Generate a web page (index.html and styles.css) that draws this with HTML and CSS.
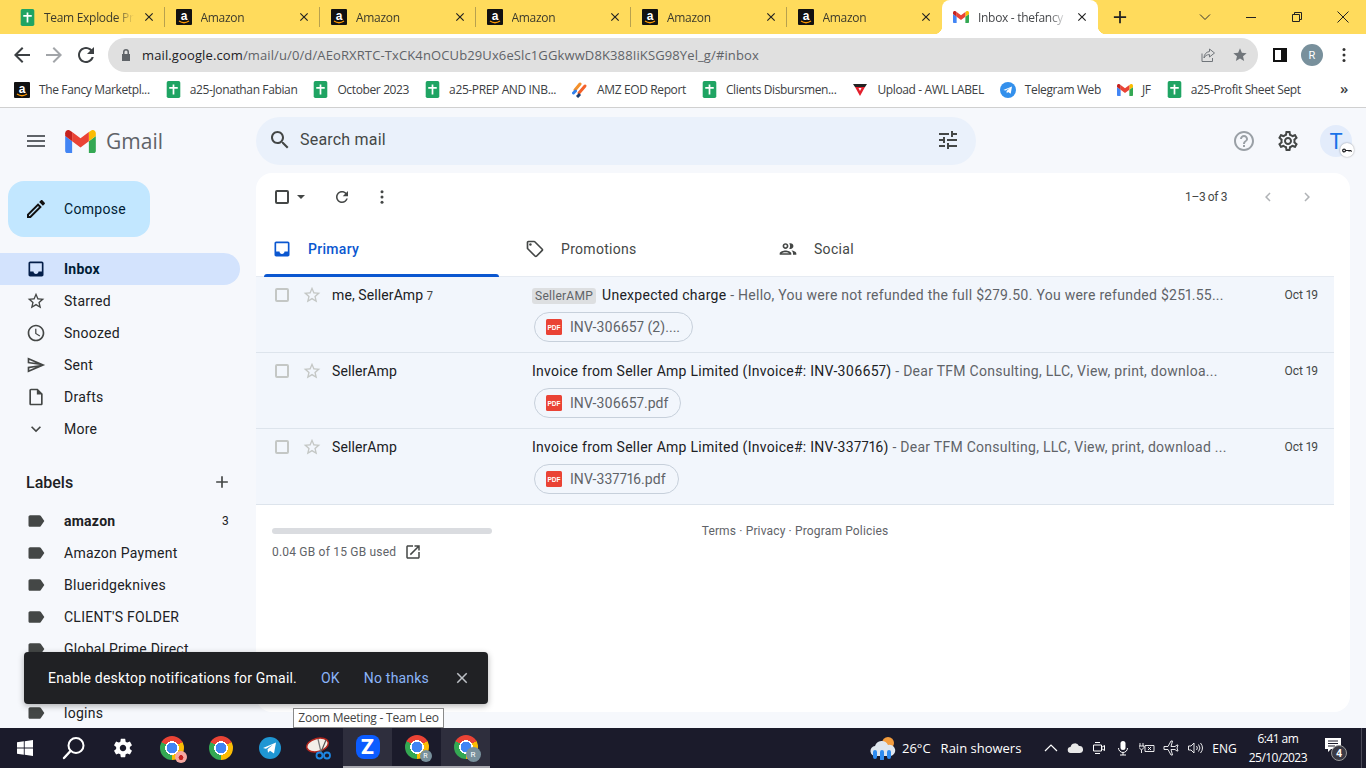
FILE: index.html
```html
<!DOCTYPE html>
<html lang="en">
<head>
  <meta charset="UTF-8" />
  <title>Inbox - Gmail</title>
  <link rel="stylesheet" href="styles.css">
</head>
<body>
  <svg class="defs" width="0" height="0">
    <symbol id="amz" viewBox="0 0 16 16">
      <rect width="16" height="16" rx="1" fill="#111"/>
      <text x="8" y="10.5" font-size="12" font-weight="700" font-family="Liberation Sans" fill="#fff" text-anchor="middle">a</text>
      <path d="M3 12c3 2 7 2 10 0" fill="none" stroke="#f90" stroke-width="1.4"/>
    </symbol>
    <symbol id="sheet" viewBox="0 0 16 20">
      <rect width="16" height="20" rx="2" fill="#1fa463"/>
      <path d="M7 4h2v12H7zM3 7h10v2H3z" fill="#fff"/>
    </symbol>
    <symbol id="gm" viewBox="52 42 88 66">
      <path fill="#4285f4" d="M58 108h14V74L52 59v43c0 3.32 2.69 6 6 6"/>
      <path fill="#34a853" d="M120 108h14c3.32 0 6-2.69 6-6V59l-20 15"/>
      <path fill="#fbbc04" d="M120 48v26l20-15v-8c0-7.42-8.47-11.65-14.4-7.2"/>
      <path fill="#ea4335" d="M72 74V48l24 18 24-18v26L96 92"/>
      <path fill="#c5221f" d="M52 51v8l20 15V48l-5.6-4.2c-5.94-4.45-14.4-.22-14.4 7.2"/>
    </symbol>
    <symbol id="x" viewBox="0 0 24 24"><path d="M19 6.41 17.59 5 12 10.59 6.41 5 5 6.41 10.59 12 5 17.59 6.41 19 12 13.41 17.59 19 19 17.59 13.41 12z"/></symbol>
    <symbol id="label" viewBox="0 0 24 24"><path d="M17.63 5.84C17.27 5.33 16.67 5 16 5L5 5.01C3.9 5.01 3 5.9 3 7v10c0 1.1.9 1.99 2 1.99L16 19c.67 0 1.27-.33 1.63-.84L22 12l-4.37-6.16z"/></symbol>
    <symbol id="star" viewBox="0 0 24 24"><path d="M22 9.24l-7.19-.62L12 2 9.19 8.63 2 9.24l5.46 4.73L5.82 21 12 17.27 18.18 21l-1.63-7.03L22 9.24zM12 15.4l-3.76 2.27 1-4.28-3.32-2.88 4.38-.38L12 6.1l1.71 4.04 4.38.38-3.32 2.88 1 4.28L12 15.4z"/></symbol>
    <symbol id="inbox" viewBox="0 0 24 24"><path d="M19 3H5c-1.1 0-2 .9-2 2v14c0 1.1.9 2 2 2h14c1.1 0 2-.9 2-2V5c0-1.1-.9-2-2-2zm0 12h-4c0 1.66-1.34 3-3 3s-3-1.34-3-3H5V5h14v10z"/></symbol>
    <symbol id="pdf" viewBox="0 0 16 16">
      <rect width="16" height="16" rx="1.5" fill="#ea4335"/>
      <text x="8" y="10.5" font-size="6.5" font-weight="700" font-family="Liberation Sans" fill="#fff" text-anchor="middle">PDF</text>
    </symbol>
  </svg>

  <div class="tabstrip">
    <div class="tab"><svg class="fav-sheet"><use href="#sheet"/></svg><span class="tab-title">Team Explode Pr</span><svg class="tab-x"><use href="#x"/></svg></div>
    <div class="tab"><svg class="fav"><use href="#amz"/></svg><span class="tab-title">Amazon</span><svg class="tab-x"><use href="#x"/></svg></div>
    <div class="tab"><svg class="fav"><use href="#amz"/></svg><span class="tab-title">Amazon</span><svg class="tab-x"><use href="#x"/></svg></div>
    <div class="tab"><svg class="fav"><use href="#amz"/></svg><span class="tab-title">Amazon</span><svg class="tab-x"><use href="#x"/></svg></div>
    <div class="tab"><svg class="fav"><use href="#amz"/></svg><span class="tab-title">Amazon</span><svg class="tab-x"><use href="#x"/></svg></div>
    <div class="tab tab-last"><svg class="fav"><use href="#amz"/></svg><span class="tab-title">Amazon</span><svg class="tab-x"><use href="#x"/></svg></div>
    <div class="tab tab-active"><svg class="fav"><use href="#gm"/></svg><span class="tab-title">Inbox - thefancy</span><svg class="tab-x"><use href="#x"/></svg></div>
    <svg class="new-tab" viewBox="0 0 16 16"><path d="M7 1h2v6h6v2H9v6H7V9H1V7h6z"/></svg>
    <div class="win-ctrls">
      <svg viewBox="0 0 14 14"><path d="M2 4.5l5 5 5-5" fill="none" stroke="#333"/></svg>
      <svg viewBox="0 0 14 14"><path d="M2 7.5h10" stroke="#222"/></svg>
      <svg viewBox="0 0 14 14"><path d="M2.5 4.5h7v7h-7zM4.5 4.5v-2h7v7h-2" fill="none" stroke="#222"/></svg>
      <svg viewBox="0 0 14 14"><path d="M1.5 1.5l11 11M12.5 1.5l-11 11" stroke="#222"/></svg>
    </div>
  </div>

  <div class="toolbar">
    <svg class="nav-ico" viewBox="0 0 24 24"><path d="M20 11H7.83l5.59-5.59L12 4l-8 8 8 8 1.41-1.41L7.83 13H20z" fill="#3c4043"/></svg>
    <svg class="nav-ico" viewBox="0 0 24 24"><path d="M4 11h12.17l-5.59-5.59L12 4l8 8-8 8-1.41-1.41L16.17 13H4z" fill="#a2a5a9"/></svg>
    <svg class="nav-ico" viewBox="0 0 24 24"><path d="M17.65 6.35C16.2 4.9 14.21 4 12 4c-4.42 0-7.99 3.58-7.99 8s3.57 8 7.99 8c3.73 0 6.84-2.55 7.73-6h-2.08c-.82 2.33-3.04 4-5.65 4-3.31 0-6-2.69-6-6s2.69-6 6-6c1.66 0 3.14.69 4.22 1.78L13 11h7V4l-2.35 2.35z" fill="#3c4043"/></svg>
    <div class="omnibox">
      <svg class="lock" viewBox="0 0 12 14"><path d="M3 6V4a3 3 0 0 1 6 0v2h1v7H2V6zm1.5 0h3V4a1.5 1.5 0 0 0-3 0z" fill="#5f6368"/></svg>
      <span class="url"><b>mail.google.com</b>/mail/u/0/d/AEoRXRTC-TxCK4nOCUb29Ux6eSlc1GGkwwD8K388IiKSG98Yel_g/#inbox</span>
      <svg class="omni-ico" viewBox="0 0 16 16"><path d="M9.5 2l5 4-5 4V7.6C6.5 7.6 5 9 4 11c0-3.500 2-6 5.500-6.500zM2 6.500V14.500h10.500V11" fill="none" stroke="#70757a"/></svg>
      <svg class="omni-ico" viewBox="0 0 24 24"><path d="M12 17.270 18.180 21l-1.640-7.030L22 9.240l-7.190-.61L12 2 9.190 8.630 2 9.240l5.460 4.730L5.820 21z" fill="#70757a"/></svg>
    </div>
    <div class="side-panel"></div>
    <div class="profile">R</div>
    <svg class="kebab" viewBox="0 0 4 16"><circle cx="2" cy="2.500" r="1.500"/><circle cx="2" cy="8" r="1.500"/><circle cx="2" cy="13.500" r="1.500"/></svg>
  </div>

  <div class="bookmarks">
    <div class="bm"><svg class="fav"><use href="#amz"/></svg>The Fancy Marketpl...</div>
    <div class="bm"><svg class="fav-sheet"><use href="#sheet"/></svg>a25-Jonathan Fabian</div>
    <div class="bm"><svg class="fav-sheet"><use href="#sheet"/></svg>October 2023</div>
    <div class="bm"><svg class="fav-sheet"><use href="#sheet"/></svg>a25-PREP AND INB...</div>
    <div class="bm">
      <svg class="fav" viewBox="0 0 16 16"><path d="M3 8l5-6" stroke="#f4902a" stroke-width="3" stroke-linecap="round"/><path d="M7 11l6-7" stroke="#f4622a" stroke-width="3" stroke-linecap="round"/><path d="M1.500 11l2-2" stroke="#2f80ed" stroke-width="3" stroke-linecap="round"/><path d="M5 15l3-3" stroke="#1c3d6e" stroke-width="3"/></svg>
      AMZ EOD Report
    </div>
    <div class="bm"><svg class="fav-sheet"><use href="#sheet"/></svg>Clients Disbursmen...</div>
    <div class="bm">
      <svg class="fav" viewBox="0 0 16 16"><path d="M1 2h14l-2 3H3z" fill="#222"/><path d="M3 5h10l-5 9z" fill="#e3202d"/><path d="M6.500 6h3L8 9z" fill="#fff"/></svg>
      Upload - AWL LABEL
    </div>
    <div class="bm">
      <svg class="fav" viewBox="0 0 16 16"><circle cx="8" cy="8" r="8" fill="#3390ec"/><path d="M3.300 8l8.700-3.500-1.300 7.300-2.600-1.900-1.300 1.300-.3-2.300 3.500-3-4.500 2.700z" fill="#fff"/></svg>
      Telegram Web
    </div>
    <div class="bm"><svg class="fav"><use href="#gm"/></svg>JF</div>
    <div class="bm"><svg class="fav-sheet"><use href="#sheet"/></svg>a25-Profit Sheet Sept</div>
    <span class="bm-more">»</span>
  </div>

  <div class="gmail">
    <header class="gm-head">
      <div class="brand">
        <svg class="ico menu-ico" viewBox="0 0 24 24"><path d="M3 18h18v-2H3v2zm0-5h18v-2H3v2zm0-7v2h18V6H3z"/></svg>
        <svg class="gm-logo"><use href="#gm"/></svg>
        <span class="gm-word">Gmail</span>
      </div>
      <div class="search">
        <svg class="ico" viewBox="0 0 24 24"><path d="M15.500 14h-.79l-.28-.27C15.410 12.590 16 11.110 16 9.500 16 5.910 13.090 3 9.500 3S3 5.910 3 9.500 5.910 16 9.500 16c1.610 0 3.090-.59 4.230-1.570l.27.28v.79l5 4.990L20.490 19l-4.990-5zm-6 0C7.010 14 5 11.990 5 9.500S7.010 5 9.500 5 14 7.010 14 9.500 11.990 14 9.500 14z"/></svg>
        <span class="search-text">Search mail</span>
        <svg class="ico tune" viewBox="0 0 24 24"><path d="M3 17v2h6v-2H3zM3 5v2h10V5H3zm10 16v-2h8v-2h-8v-2h-2v6h2zM7 9v2H3v2h4v2h2V9H7zm14 4v-2H11v2h10zm-6-4h2V7h4V5h-4V3h-2v6z"/></svg>
      </div>
      <div class="head-right">
        <svg class="ico help" viewBox="0 0 24 24"><path d="M11 18h2v-2h-2v2zm1-16C6.480 2 2 6.480 2 12s4.480 10 10 10 10-4.480 10-10S17.520 2 12 2zm0 18c-4.410 0-8-3.590-8-8s3.590-8 8-8 8 3.590 8 8-3.590 8-8 8zm0-14c-2.210 0-4 1.790-4 4h2c0-1.100.9-2 2-2s2 .9 2 2c0 2-3 1.750-3 5h2c0-2.250 3-2.500 3-5 0-2.210-1.790-4-4-4z"/></svg>
        <svg class="ico" viewBox="0 0 24 24"><path d="M19.430 12.980c.04-.32.07-.64.07-.98 0-.34-.03-.66-.07-.98l2.110-1.650c.19-.15.24-.42.12-.64l-2-3.460c-.09-.16-.26-.25-.44-.25-.06 0-.12.01-.17.03l-2.490 1c-.52-.4-1.080-.73-1.690-.98l-.38-2.650C14.460 2.180 14.250 2 14 2h-4c-.25 0-.46.18-.49.42l-.38 2.650c-.61.25-1.170.59-1.690.98l-2.490-1c-.06-.02-.12-.03-.18-.03-.17 0-.34.09-.43.25l-2 3.460c-.13.22-.07.49.12.64l2.110 1.650c-.04.32-.07.65-.07.98 0 .33.03.66.07.98l-2.110 1.650c-.19.15-.24.42-.12.64l2 3.460c.09.16.26.25.44.25.06 0 .12-.01.17-.03l2.490-1c.52.4 1.080.73 1.690.98l.38 2.650c.03.24.24.42.49.42h4c.25 0 .46-.18.49-.42l.38-2.650c.61-.25 1.170-.59 1.690-.98l2.490 1c.06.02.12.03.18.03.17 0 .34-.09.43-.25l2-3.460c.12-.22.07-.49-.12-.64l-2.110-1.650zm-1.980-1.710c.04.31.05.52.05.73 0 .21-.02.43-.05.73l-.14 1.130.89.7 1.080.84-.7 1.210-1.270-.51-1.040-.42-.9.68c-.43.32-.84.56-1.250.73l-1.060.43-.16 1.130-.2 1.350h-1.400l-.19-1.350-.16-1.130-1.060-.43c-.43-.18-.83-.41-1.230-.71l-.91-.7-1.060.43-1.270.51-.7-1.210 1.080-.84.89-.7-.14-1.130c-.03-.31-.05-.54-.05-.74s.02-.43.05-.73l.14-1.130-.89-.7-1.080-.84.7-1.210 1.270.51 1.040.42.9-.68c.43-.32.84-.56 1.250-.73l1.060-.43.16-1.130.2-1.350h1.390l.19 1.350.16 1.130 1.060.43c.43.18.83.41 1.230.71l.91.7 1.060-.43 1.270-.51.7 1.210-1.070.85-.89.7.14 1.130zM12 8c-2.210 0-4 1.790-4 4s1.790 4 4 4 4-1.790 4-4-1.790-4-4-4zm0 6c-1.100 0-2-.9-2-2s.9-2 2-2 2 .9 2 2-.9 2-2 2z"/></svg>
        <div class="avatar">T
          <span class="key-badge"><svg viewBox="0 0 12 6"><circle cx="2.500" cy="3" r="1.700" fill="none" stroke="#202124" stroke-width="1.400"/><path d="M4 3h7v1.800M8.500 3v1.500" fill="none" stroke="#202124" stroke-width="1.200"/></svg></span>
        </div>
      </div>
    </header>

    <div class="gm-body">
      <nav class="sidebar">
        <div class="compose">
          <svg class="ico" viewBox="0 0 24 24"><path d="M3 17.250V21h3.750L17.810 9.940l-3.750-3.750L3 17.250zM5.920 19H5v-.92l9.060-9.060.92.92L5.920 19zM20.710 7.040c.39-.39.39-1.020 0-1.410l-2.340-2.340c-.2-.2-.45-.29-.71-.29s-.51.1-.7.29l-1.830 1.830 3.750 3.750 1.830-1.830z"/></svg>
          Compose
        </div>
        <div class="nav-row nav-active"><svg class="nav-icon"><use href="#inbox"/></svg>Inbox</div>
        <div class="nav-row"><svg class="nav-icon"><use href="#star"/></svg>Starred</div>
        <div class="nav-row"><svg class="nav-icon" viewBox="0 0 24 24"><path d="M11.990 2C6.470 2 2 6.480 2 12s4.470 10 9.990 10C17.520 22 22 17.520 22 12S17.520 2 11.990 2zM12 20c-4.420 0-8-3.580-8-8s3.580-8 8-8 8 3.580 8 8-3.580 8-8 8zm.5-13H11v6l5.250 3.150.75-1.230-4.500-2.670z"/></svg>Snoozed</div>
        <div class="nav-row"><svg class="nav-icon" viewBox="0 0 24 24"><path d="M4.010 6.030l7.510 3.220-7.520-1 .01-2.220m7.500 8.720L4 17.970v-2.220l7.510-1M2.010 3L2 10l15 2-15 2 .01 7L23 12 2.010 3z"/></svg>Sent</div>
        <div class="nav-row"><svg class="nav-icon" viewBox="0 0 24 24"><path d="M14 2H6c-1.100 0-1.990.9-1.990 2L4 20c0 1.100.89 2 1.990 2H18c1.100 0 2-.9 2-2V8l-6-6zM6 20V4h7v5h5v11H6z"/></svg>Drafts</div>
        <div class="nav-row"><svg class="nav-icon" viewBox="0 0 24 24"><path d="M16.590 8.590 12 13.170 7.410 8.590 6 10l6 6 6-6z"/></svg>More</div>

        <div class="labels-head">Labels
          <svg class="ico" viewBox="0 0 24 24"><path d="M19 13h-6v6h-2v-6H5v-2h6V5h2v6h6v2z"/></svg>
        </div>
        <div class="nav-row label-bold"><svg class="nav-icon"><use href="#label"/></svg>amazon<span class="count">3</span></div>
        <div class="nav-row"><svg class="nav-icon"><use href="#label"/></svg>Amazon Payment</div>
        <div class="nav-row"><svg class="nav-icon"><use href="#label"/></svg>Blueridgeknives</div>
        <div class="nav-row"><svg class="nav-icon"><use href="#label"/></svg>CLIENT'S FOLDER</div>
        <div class="nav-row"><svg class="nav-icon"><use href="#label"/></svg>Global Prime Direct</div>
        <div class="nav-row"></div>
        <div class="nav-row"><svg class="nav-icon"><use href="#label"/></svg>logins</div>
      </nav>

      <main class="card">
        <div class="list-tools">
          <span class="checkbox dark"></span>
          <svg class="caret" viewBox="0 0 10 5"><path d="M0 0h10L5 5z"/></svg>
          <svg class="ico-18 refresh" viewBox="0 0 24 24"><path d="M17.650 6.350C16.200 4.900 14.210 4 12 4c-4.420 0-7.990 3.580-7.990 8s3.570 8 7.990 8c3.730 0 6.840-2.550 7.730-6h-2.080c-.82 2.330-3.040 4-5.650 4-3.310 0-6-2.690-6-6s2.690-6 6-6c1.660 0 3.140.69 4.220 1.780L13 11h7V4l-2.350 2.350z"/></svg>
          <svg class="ico-18 dots" viewBox="0 0 24 24"><circle cx="12" cy="5" r="2"/><circle cx="12" cy="12" r="2"/><circle cx="12" cy="19" r="2"/></svg>
          <span class="pager">1–3 of 3</span>
          <svg class="ico-18 pg-btn" viewBox="0 0 24 24"><path d="M15.410 7.410 14 6l-6 6 6 6 1.410-1.410L10.830 12z"/></svg>
          <svg class="ico-18 pg-btn" viewBox="0 0 24 24"><path d="M10 6 8.590 7.410 13.170 12l-4.580 4.590L10 18l6-6z"/></svg>
        </div>

        <div class="cat-tabs">
          <div class="cat cat-on"><svg class="cat-ico"><use href="#inbox"/></svg>Primary</div>
          <div class="cat"><svg class="cat-ico" viewBox="0 0 24 24"><path d="M21.410 11.580l-9-9C12.050 2.220 11.550 2 11 2H4c-1.100 0-2 .9-2 2v7c0 .55.22 1.050.59 1.420l9 9c.36.36.86.58 1.410.58s1.050-.22 1.410-.59l7-7c.37-.36.59-.86.59-1.410s-.23-1.060-.59-1.420zM13 20.010L4 11V4h7v-.01l9 9-7 7.020z"/><circle cx="6.500" cy="6.500" r="1.500"/></svg>Promotions</div>
          <div class="cat"><svg class="cat-ico" viewBox="0 0 24 24"><path d="M9 13.750c-2.340 0-7 1.170-7 3.500V19h14v-1.750c0-2.330-4.660-3.500-7-3.500zM4.340 17c.84-.58 2.870-1.250 4.660-1.250s3.820.67 4.660 1.250H4.340zM9 12c1.930 0 3.500-1.570 3.500-3.500S10.930 5 9 5 5.500 6.570 5.500 8.500 7.070 12 9 12zm0-5c.83 0 1.500.67 1.500 1.500S9.830 10 9 10s-1.500-.67-1.500-1.500S8.170 7 9 7zm7.040 6.810c1.160.84 1.960 1.960 1.960 3.440V19h4v-1.750c0-2.020-3.500-3.170-5.960-3.440zM15 12c1.930 0 3.500-1.570 3.500-3.500S16.930 5 15 5c-.54 0-1.040.13-1.500.35.63.89 1 1.980 1 3.150s-.37 2.260-1 3.150c.46.22.96.35 1.500.35z"/></svg>Social</div>
        </div>

        <div class="mail-row">
          <span class="checkbox"></span>
          <svg class="star"><use href="#star"/></svg>
          <span class="sender">me, SellerAmp <small>7</small></span>
          <div class="subject"><span class="tag">SellerAMP</span>Unexpected charge <span class="snippet">- Hello, You were not refunded the full $279.50. You were refunded $251.55...</span></div>
          <span class="date">Oct 19</span>
          <div class="chip"><svg class="pdf"><use href="#pdf"/></svg>INV-306657 (2)....</div>
        </div>
        <div class="mail-row">
          <span class="checkbox"></span>
          <svg class="star"><use href="#star"/></svg>
          <span class="sender">SellerAmp</span>
          <div class="subject">Invoice from Seller Amp Limited (Invoice#: INV-306657) <span class="snippet">- Dear TFM Consulting, LLC, View, print, downloa...</span></div>
          <span class="date">Oct 19</span>
          <div class="chip"><svg class="pdf"><use href="#pdf"/></svg>INV-306657.pdf</div>
        </div>
        <div class="mail-row">
          <span class="checkbox"></span>
          <svg class="star"><use href="#star"/></svg>
          <span class="sender">SellerAmp</span>
          <div class="subject">Invoice from Seller Amp Limited (Invoice#: INV-337716) <span class="snippet">- Dear TFM Consulting, LLC, View, print, download ...</span></div>
          <span class="date">Oct 19</span>
          <div class="chip"><svg class="pdf"><use href="#pdf"/></svg>INV-337716.pdf</div>
        </div>

        <div class="list-foot">
          <div class="storage">
            <div class="storage-bar"></div>
            <div class="storage-text">0.04 GB of 15 GB used
              <svg class="ico-18" viewBox="0 0 24 24"><path d="M19 19H5V5h7V3H5c-1.110 0-2 .9-2 2v14c0 1.100.89 2 2 2h14c1.100 0 2-.9 2-2v-7h-2v7zM14 3v2h3.590l-9.830 9.830 1.410 1.410L19 6.410V10h2V3h-7z"/></svg>
            </div>
          </div>
          <div class="terms">Terms · Privacy · Program Policies</div>
        </div>
      </main>
    </div>

    <div class="snackbar">
      <span class="snack-msg">Enable desktop notifications for Gmail.</span>
      <span class="snack-btn">OK</span>
      <span class="snack-btn">No thanks</span>
      <svg class="snack-x"><use href="#x"/></svg>
    </div>
    <div class="tooltip">Zoom Meeting - Team Leo</div>
  </div>

  <footer class="taskbar">
    <div class="task"><svg class="win" viewBox="0 0 16 16"><path d="M0 2.300 6.800 1.300v6.300H0zM7.700 1.200 16 0v7.600H7.700zM0 8.400h6.800v6.300L0 13.700zM7.700 8.400H16V16l-8.300-1.200z" fill="#fff"/></svg></div>
    <div class="task"><svg class="t-ico" viewBox="0 0 24 24"><circle cx="14" cy="9.500" r="7.500" fill="none" stroke="#fff" stroke-width="2"/><path d="M8.500 15 2 22" stroke="#fff" stroke-width="2.400" stroke-linecap="round"/></svg></div>
    <div class="task"><svg class="t-ico gear" viewBox="0 0 24 24"><path d="M19.430 12.980c.04-.32.07-.64.07-.98s-.03-.66-.07-.98l2.110-1.650c.19-.15.24-.42.12-.64l-2-3.460c-.12-.22-.39-.3-.61-.22l-2.490 1c-.52-.4-1.080-.73-1.690-.98l-.38-2.650C14.460 2.180 14.250 2 14 2h-4c-.25 0-.46.18-.49.42l-.38 2.650c-.61.25-1.170.59-1.690.98l-2.490-1c-.23-.09-.49 0-.61.22l-2 3.460c-.13.22-.07.49.12.64l2.110 1.650c-.04.32-.07.65-.07.98s.03.66.07.98l-2.110 1.650c-.19.15-.24.42-.12.64l2 3.460c.12.22.39.3.61.22l2.490-1c.52.4 1.080.73 1.690.98l.38 2.650c.03.24.24.42.49.42h4c.25 0 .46-.18.49-.42l.38-2.650c.61-.25 1.170-.59 1.690-.98l2.490 1c.23.09.49 0 .61-.22l2-3.460c.12-.22.07-.49-.12-.64l-2.110-1.650zM12 15.500c-1.930 0-3.500-1.570-3.500-3.500s1.570-3.500 3.500-3.500 3.500 1.570 3.500 3.500-1.570 3.500-3.500 3.500z" fill="#fff"/></svg></div>
    <div class="task"><span class="chrome"><span class="badge badge-pink"></span></span></div>
    <div class="task"><span class="chrome"></span></div>
    <div class="task"><svg class="t-ico" viewBox="0 0 24 24"><circle cx="12" cy="12" r="11" fill="#1f96d3"/><path d="M5 12l13-5.500-2 11-4-2.800-2 2-.5-3.500 5.500-4.700-7 4.200z" fill="#fff"/></svg></div>
    <div class="task"><svg class="snip" viewBox="0 0 26 24"><ellipse cx="11.500" cy="9" rx="11" ry="6.500" transform="rotate(-15 11.500 9)" fill="#f3eee8" stroke="#b3261e" stroke-width="1.500"/><path d="M12 3l3 13" stroke="#777" stroke-width="1.200"/><path d="M20 4l-5 12" stroke="#555" stroke-width="1.200"/><circle cx="13.500" cy="19.500" r="3" fill="none" stroke="#1e88e5" stroke-width="1.800"/><circle cx="21" cy="19.500" r="3" fill="none" stroke="#1e88e5" stroke-width="1.800"/></svg></div>
    <div class="task task-on"><span class="zoom-app">Z</span></div>
    <div class="task task-run"><span class="chrome"><span class="badge">R</span></span></div>
    <div class="task task-on"><span class="chrome"><span class="badge badge-big">R</span></span></div>

    <div class="tray">
      <svg class="weather" viewBox="0 0 26 24"><circle cx="18" cy="7" r="6" fill="#f39c3d"/><path d="M6 20a5 5 0 0 1-1-10 7 7 0 0 1 13-1 5.500 5.500 0 0 1 3 11z" fill="#dfe6ee"/><path d="M5 21v-5M12 23v-7M19 21v-5" stroke="#2f8cf0" stroke-width="4" stroke-linecap="round"/></svg>
      <span class="temp">26°C</span>
      <span class="rain">Rain showers</span>
      <svg class="tray-ico tray-first" viewBox="0 0 16 16"><path d="M2 11l6-6 6 6" fill="none" stroke="#fff" stroke-width="1.200"/></svg>
      <svg class="tray-ico" viewBox="0 0 16 16"><path d="M4 13a3 3 0 0 1-.5-6 4.500 4.500 0 0 1 8.500-1 3.500 3.500 0 0 1 1 7z" fill="#e8e8e8"/></svg>
      <svg class="tray-ico" viewBox="0 0 16 16"><path d="M2.500 5h8v6h-8zM10.500 7.500l3-2v5l-3-2M4 2.500h5M4 13.500h5" fill="none" stroke="#fff"/></svg>
      <svg class="tray-ico" viewBox="0 0 16 16"><rect x="5.500" y="1" width="5" height="9" rx="2.500" fill="#fff"/><path d="M3.500 8a4.500 4.500 0 0 0 9 0M8 12.500V15M5 15h6" fill="none" stroke="#fff"/></svg>
      <svg class="tray-ico" viewBox="0 0 16 16"><path d="M1 3v3M4 3v3M0 6h5v1.500L2.500 10 0 7.500zM2.500 10v3M6 5.500h9v6H6zM9 7l3 3M12 7l-3 3" fill="none" stroke="#fff" stroke-width=".9"/></svg>
      <svg class="tray-ico" viewBox="0 0 16 16"><path d="M1 6.500h4L8 1h1.500L8 6.500h4L14 5h1l-1 3 1 3h-1l-2-1.500H8L9.500 15H8L5 9.500H1z" fill="none" stroke="#fff" stroke-width=".9"/></svg>
      <svg class="tray-ico" viewBox="0 0 16 16"><path d="M1.500 6H4l3-3v10l-3-3H1.500zM9.500 6a3 3 0 0 1 0 4M11.500 4.500a5.500 5.500 0 0 1 0 7M13.500 3a8 8 0 0 1 0 10" fill="none" stroke="#fff" stroke-width=".9"/></svg>
      <span class="lang">ENG</span>
      <div class="clock"><span>6:41 am</span><span>25/10/2023</span></div>
      <div class="notif">
        <svg viewBox="0 0 16 16"><path d="M0 1h16v11H6l-3 3v-3H0z" fill="#fff"/><path d="M3 4h10M3 6.500h10M3 9h7" stroke="#1b1b2b"/></svg>
        <span class="notif-count">4</span>
      </div>
    </div>
  </footer>
</body>
</html>
```

FILE: styles.css
```css
* { box-sizing: border-box; }
html, body { height: 100%; }
body {
  margin: 0;
  height: 768px;
  overflow: hidden;
  display: flex;
  flex-direction: column;
  background: #fff;
  font-family: Roboto, "Noto Sans", sans-serif;
  color: #202124;
}
svg { display: block; flex: none; }
.defs { display: none; }

/* browser chrome */
.tabstrip {
  height: 34px;
  background: #ffdb5c;
  display: flex;
  align-items: center;
  padding-left: 9px;
  flex: none;
}
.tab {
  width: 155.5px;
  height: 34px;
  padding: 0 9px 0 11px;
  display: flex;
  align-items: center;
  font: 12px "Open Sans", sans-serif;
  letter-spacing: -.3px;
  color: #3c3a2c;
  background: linear-gradient(#b8a14e, #b8a14e) right center / 1px 20px no-repeat;
}
.tab-last { background: none; }
.tab-active {
  background: #fff;
  border-radius: 8px 8px 0 0;
  color: #45474a;
  position: relative;
}
.tab-active::before,
.tab-active::after {
  content: "";
  position: absolute;
  bottom: 0;
  width: 8px;
  height: 8px;
}
.tab-active::before {
  left: -8px;
  background: radial-gradient(circle at 0 0, transparent 8px, #fff 8.5px);
}
.tab-active::after {
  right: -8px;
  background: radial-gradient(circle at 100% 0, transparent 8px, #fff 8.5px);
}
.fav { width: 16px; height: 16px; }
.fav-sheet { width: 16px; height: 20px; }
.tab .fav-sheet { width: 15px; height: 17px; }
.tab-title {
  flex: 1;
  margin-left: 9px;
  white-space: nowrap;
  overflow: hidden;
  -webkit-mask-image: linear-gradient(to right, #000 calc(100% - 26px), transparent calc(100% - 8px));
  mask-image: linear-gradient(to right, #000 calc(100% - 26px), transparent calc(100% - 8px));
}
.tab-x { width: 14px; height: 14px; fill: #222; }
.new-tab { width: 14px; height: 14px; margin-left: 15px; fill: #222; }
.win-ctrls {
  margin-left: auto;
  display: flex;
  gap: 32px;
  padding-right: 16px;
}
.win-ctrls svg { width: 14px; height: 14px; }
.toolbar {
  height: 38px;
  display: flex;
  align-items: center;
  padding: 4px 0 0 10px;
  flex: none;
}
.nav-ico { width: 24px; height: 24px; margin-right: 8px; }
.omnibox {
  width: 1150px;
  height: 34px;
  margin-left: 2px;
  background: #e0e0e0;
  border-radius: 17px;
  display: flex;
  align-items: center;
  padding: 0 10px 0 12px;
  gap: 14px;
}
.lock { width: 12px; height: 14px; margin-right: -4px; }
.url {
  flex: 1;
  font: 13px "Open Sans", sans-serif;
  letter-spacing: .12px;
  color: #5f6368;
  white-space: nowrap;
}
.url b { font-weight: 400; color: #202124; }
.omni-ico { width: 16px; height: 16px; margin-left: 2px; }
.side-panel {
  width: 14px;
  height: 14px;
  margin-left: 15px;
  border: 2px solid #111;
  border-right-width: 6px;
}
.profile {
  width: 22px;
  height: 22px;
  margin-left: 14px;
  border-radius: 50%;
  background: #78909c;
  color: #fff;
  font-size: 11px;
  display: flex;
  align-items: center;
  justify-content: center;
}
.kebab { width: 4px; height: 16px; margin-left: 19px; fill: #333; }
.bookmarks {
  height: 36px;
  display: flex;
  align-items: center;
  padding-left: 14px;
  gap: 16px;
  border-bottom: 1px solid #d0d0d0;
  font: 12px "Open Sans", sans-serif;
  letter-spacing: -.37px;
  color: #3c4043;
  flex: none;
}
.bm {
  display: flex;
  align-items: center;
  gap: 9px;
  white-space: nowrap;
}
.bm .fav-sheet { width: 15px; height: 17px; }
.bm-more { margin-left: auto; padding: 0 18px 3px 0; font-size: 15px; font-weight: 600; }

/* gmail */
.gmail {
  flex: 1;
  min-height: 0;
  background: #f6f8fc;
  display: flex;
  flex-direction: column;
  position: relative;
}
.gm-head {
  height: 65px;
  flex: none;
  display: flex;
  padding-top: 9px;
}
.ico { width: 24px; height: 24px; fill: #444746; }
.brand {
  width: 256px;
  height: 48px;
  display: flex;
  align-items: center;
  padding-left: 24px;
  flex: none;
}
.menu-ico { fill: #5f6368; }
.gm-logo { width: 31px; height: 23px; margin-left: 17px; }
.gm-word { margin-left: 10px; font: 21px "Open Sans", sans-serif; color: #5f6368; }
.search {
  width: 720px;
  height: 48px;
  background: #eaf1fb;
  border-radius: 24px;
  display: flex;
  align-items: center;
  padding: 0 16px 0 12px;
}
.search .ico { margin-bottom: 2px; }
.search-text { flex: 1; margin: 0 0 3px 8px; font-size: 16px; letter-spacing: .2px; color: #444746; }
.head-right {
  display: flex;
  align-items: center;
  height: 48px;
  margin-left: auto;
  padding-right: 14px;
  gap: 20px;
}
.help { fill: #9aa0a6; }
.avatar {
  width: 32px;
  height: 32px;
  border-radius: 50%;
  background: #e3ecfb;
  color: #1a73e8;
  font-size: 22px;
  display: flex;
  align-items: center;
  justify-content: center;
  position: relative;
}
.key-badge {
  position: absolute;
  right: -2px;
  bottom: 0;
  width: 14px;
  height: 14px;
  border-radius: 50%;
  background: #fff;
  box-shadow: 0 0 2px rgba(0,0,0,.4);
  display: flex;
  align-items: center;
  justify-content: center;
}
.key-badge svg { width: 10px; height: 5px; }
.gm-body {
  flex: 1;
  min-height: 0;
  display: flex;
  padding: 0 16px 16px 0;
}
.sidebar {
  width: 256px;
  flex: none;
  padding-top: 8px;
  overflow: hidden;
  margin-bottom: -16px;
}
.compose {
  width: 142px;
  height: 56px;
  margin: 0 0 16px 8px;
  padding-left: 16px;
  border-radius: 16px;
  background: #c2e7ff;
  display: flex;
  align-items: center;
  gap: 16px;
  font-size: 14px;
  letter-spacing: .3px;
  color: #001d35;
}
.compose .ico { fill: #111; }
.nav-row {
  width: 240px;
  height: 32px;
  padding-left: 26px;
  border-radius: 0 16px 16px 0;
  display: flex;
  align-items: center;
  gap: 18px;
  font-size: 14px;
  letter-spacing: .25px;
  color: #202124;
}
.nav-icon { width: 20px; height: 20px; fill: #444746; }
.nav-active { background: #d3e3fd; font-weight: 700; color: #001d35; }
.nav-active .nav-icon { fill: #041e49; }
.labels-head {
  width: 240px;
  height: 44px;
  margin-top: 16px;
  padding: 0 8px 2px 26px;
  display: flex;
  align-items: center;
  justify-content: space-between;
  font-size: 16px;
  font-weight: 500;
  color: #202124;
}
.labels-head .ico { width: 20px; height: 20px; }
.label-bold { font-weight: 700; }
.count { margin-left: auto; margin-right: 11px; font-size: 12px; font-weight: 400; }

.card {
  flex: 1;
  background: #fff;
  border-radius: 16px;
}
.list-tools {
  height: 52px;
  padding: 0 16px 4px 18px;
  display: flex;
  align-items: center;
}
.checkbox {
  width: 14px;
  height: 14px;
  border: 2px solid #c4c7c5;
  border-radius: 2px;
  margin-left: 1px;
  flex: none;
}
.checkbox.dark { border-color: #444746; }
.caret { width: 8px; height: 4px; margin-left: 8px; fill: #444746; }
.ico-18 { width: 18px; height: 18px; fill: #444746; }
.refresh { margin-left: 28px; }
.dots { margin-left: 22px; }
.pager { margin-left: auto; margin-right: 32px; font-size: 12px; letter-spacing: -.4px; color: #444746; }
.pg-btn { fill: #b0b3b6; margin-right: 21px; }
.pg-btn:last-child { margin-right: 18px; }
.cat-tabs {
  width: 1078px;
  height: 52px;
  padding-left: 8px;
  display: flex;
  border-bottom: 1px solid #e6ebf2;
}
.cat {
  width: 253px;
  padding: 0 0 4px 8px;
  display: flex;
  align-items: center;
  gap: 16px;
  font-size: 14px;
  letter-spacing: .3px;
  color: #444746;
  position: relative;
}
.cat-ico { width: 20px; height: 20px; fill: #444746; }
.cat-on { color: #0b57d0; font-weight: 500; }
.cat-on .cat-ico { fill: #0b57d0; }
.cat-on::after {
  content: "";
  position: absolute;
  left: 0;
  bottom: -1px;
  width: 235px;
  height: 3px;
  border-radius: 3px 3px 0 0;
  background: #0b57d0;
}
.mail-row {
  width: 1078px;
  height: 76px;
  padding-top: 8px;
  display: grid;
  grid-template-columns: 46px 30px 200px 1fr 78px 16px;
  grid-template-rows: 20px 30px;
  row-gap: 7px;
  align-items: center;
  background: #f2f6fc;
  border-bottom: 1px solid #dde4ec;
  font-size: 14px;
  font-variant-numeric: proportional-nums;
}
.mail-row .checkbox { margin-left: 19px; }
.star { width: 20px; height: 20px; fill: #c4c7c5; }
.sender { color: #202124; letter-spacing: .1px; }
.sender small { font-size: 12px; color: #444746; }
.subject { white-space: nowrap; color: #202124; letter-spacing: .27px; overflow: hidden; }
.tag {
  display: inline-block;
  height: 16px;
  line-height: 16px;
  padding: 0 3px;
  margin-right: 6px;
  border-radius: 3px;
  background: #dddfe1;
  font-size: 12px;
  color: #5f6368;
}
.snippet { color: #5f6368; }
.date { text-align: right; font-size: 12px; color: #444746; }
.chip {
  grid-column: 4;
  justify-self: start;
  height: 30px;
  margin-left: 2px;
  padding: 0 12px 0 11px;
  border: 1px solid #c7d0db;
  border-radius: 15px;
  display: flex;
  align-items: center;
  gap: 8px;
  font-size: 14px;
  letter-spacing: .05px;
  color: #5f6368;
}
.pdf { width: 16px; height: 16px; }
.list-foot {
  display: grid;
  grid-template-columns: 1fr auto 1fr;
  width: 1078px;
  padding-top: 23px;
  font-size: 12px;
  color: #5f6368;
}
.storage { padding-left: 16px; }
.storage-bar { width: 220px; height: 6px; border-radius: 3px; background: #dadce0; }
.storage-text { margin-top: 9px; display: flex; align-items: center; gap: 8px; letter-spacing: .2px; }
.terms { margin-top: -4px; letter-spacing: .15px; }

.snackbar {
  position: absolute;
  left: 24px;
  top: 544px;
  width: 464px;
  height: 52px;
  padding: 0 17px 0 24px;
  border-radius: 4px;
  background: #202124;
  box-shadow: 0 2px 6px rgba(0,0,0,.3);
  display: flex;
  align-items: center;
  font-size: 14px;
  letter-spacing: .2px;
  color: #fff;
}
.snack-btn { margin-left: 24px; color: #8ab4f8; }
.snack-x { width: 18px; height: 18px; margin-left: auto; fill: #bdc1c6; }
.tooltip {
  position: absolute;
  left: 293px;
  top: 600px;
  width: 151px;
  height: 20px;
  background: #fff;
  border: 1px solid #8a8a8a;
  font: 12px/18px "Open Sans", sans-serif;
  letter-spacing: -.22px;
  color: #444;
  text-align: center;
  white-space: nowrap;
}

/* windows taskbar */
.taskbar {
  height: 40px;
  flex: none;
  background: #1b1b2b;
  display: flex;
  padding-right: 4px;
  color: #fff;
}
.task {
  width: 49px;
  height: 40px;
  display: flex;
  align-items: center;
  justify-content: center;
  flex: none;
}
.task-on { background: #2e2e3d; border-bottom: 2px solid #a9a9b0; }
.task-run { border-bottom: 2px solid #a9a9b0; }
.win { width: 16px; height: 16px; }
.t-ico { width: 24px; height: 24px; }
.gear { width: 22px; height: 22px; }
.snip { width: 26px; height: 24px; }
.chrome {
  width: 24px;
  height: 24px;
  border-radius: 50%;
  position: relative;
  background:
    radial-gradient(circle closest-side, #4285f4 0 44%, #fff 46% 56%, transparent 58%),
    conic-gradient(#ea4335 0 60deg, #fbbc04 60deg 180deg, #34a853 180deg 300deg, #ea4335 300deg);
}
.badge {
  position: absolute;
  right: -3px;
  bottom: -3px;
  width: 12px;
  height: 12px;
  border-radius: 50%;
  background: #78909c;
  font-size: 7px;
  line-height: 12px;
  text-align: center;
  color: #fff;
}
.badge-big { width: 15px; height: 15px; font-size: 8px; line-height: 15px; right: -3px; bottom: -3px; }
.badge-pink { background: radial-gradient(circle at 50% 55%, #c5221f 0 25%, #f6a8a0 30%); }
.zoom-app {
  width: 24px;
  height: 24px;
  border-radius: 8px;
  background: #0b5cff;
  font-size: 21px;
  font-weight: 900;
  line-height: 24px;
  text-align: center;
}
.tray {
  margin-left: auto;
  display: flex;
  align-items: center;
  border-right: 1px solid #4a4a58;
  font: 13px "Open Sans", sans-serif;
}
.weather { width: 26px; height: 24px; }
.temp { margin-left: 6px; }
.rain { margin-left: 10px; }
.tray-ico { width: 16px; height: 16px; margin-left: 8px; }
.tray-first { margin-left: 22px; }
.lang { margin-left: 9px; font-size: 12px; }
.clock {
  margin-left: 12px;
  display: flex;
  flex-direction: column;
  align-items: center;
  font-size: 12px;
  letter-spacing: -.55px;
  line-height: 19px;
}
.notif { position: relative; width: 22px; height: 22px; margin: 0 14px 0 18px; }
.notif svg { width: 16px; height: 16px; }
.notif-count {
  position: absolute;
  right: 0;
  bottom: -2px;
  width: 16px;
  height: 16px;
  border-radius: 50%;
  background: #3a3a45;
  border: 1px solid #999;
  font-size: 10px;
  font-weight: 700;
  line-height: 14px;
  text-align: center;
}
```
